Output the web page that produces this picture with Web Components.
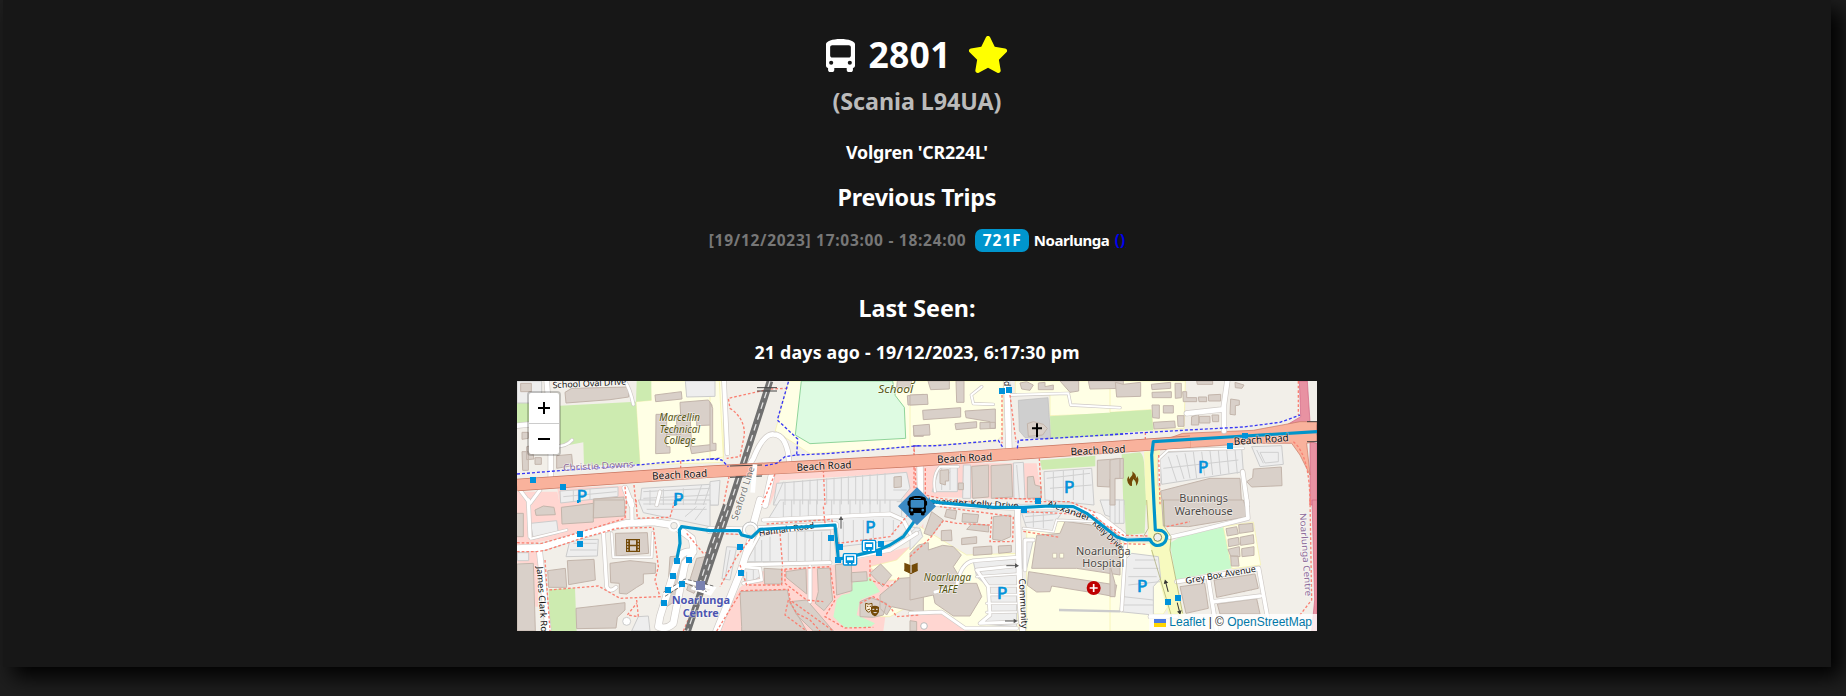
<!DOCTYPE html>
<html lang="en"><head><meta charset="utf-8"><title>2801</title>
<style>html,body{margin:0;height:100%;overflow:hidden}body{background:#1e1e1e;color:#fff;font-family:"Noto Sans","Open Sans",sans-serif;font-weight:700}</style></head>
<body>
<vehicle-card>
  <vehicle-title slot="title"><fit-text w="82">2801</fit-text></vehicle-title>
  <fit-text slot="model" w="169">(Scania L94UA)</fit-text>
  <fit-text slot="body" w="142">Volgren 'CR224L'</fit-text>
  <fit-text slot="triphead" w="159">Previous Trips</fit-text>
  <trip-row slot="trip"></trip-row>
  <fit-text slot="seenhead" w="117">Last Seen:</fit-text>
  <fit-text slot="seen" w="325">21 days ago - 19/12/2023, 6:17:30 pm</fit-text>
  <street-map slot="map"></street-map>
</vehicle-card>
<script>
const shadow=(el,html)=>{const r=el.attachShadow({mode:'open'});r.innerHTML=html;return r};

// Text tracked so that it spans exactly w pixels
class FitText extends HTMLElement{
  connectedCallback(){
    if(this.shadowRoot)return;
    const r=shadow(this,`<style>:host{display:inline-block;white-space:nowrap}span{display:inline-block}</style><span><slot></slot></span>`);
    const s=r.querySelector('span'),w=+this.getAttribute('w'),n=this.textContent.length;
    const gap=(w-s.getBoundingClientRect().width)/(n-1);
    s.style.letterSpacing=gap+'px';
    s.style.marginRight=-gap+'px';
  }
}
class VehicleTitle extends HTMLElement{
  constructor(){super();shadow(this,`<style>:host{display:flex;height:42px;line-height:42px;font-size:35.5px;justify-content:center}
  svg{display:block;fill:#fff}.bus{width:29px;height:33px;margin:6px 14px 0 0}.star{width:42px;height:37px;margin:3px 0 0 16px;fill:#ff0}</style>
  <svg class="bus" viewBox="0 0 448 512" preserveAspectRatio="none"><path fill-rule="evenodd" d="M224 0C348.800 0 448 35.200 448 80V416c0 17.700-14.300 32-32 32v32c0 17.700-14.300 32-32 32H352c-17.700 0-32-14.300-32-32V448H128v32c0 17.700-14.300 32-32 32H64c-17.700 0-32-14.300-32-32V448c-17.700 0-32-14.300-32-32V80C0 35.200 99.200 0 224 0zM64 128V256c0 17.700 14.300 32 32 32H352c17.700 0 32-14.300 32-32V128c0-17.700-14.300-32-32-32H96c-17.700 0-32 14.300-32 32zM80 400a32 32 0 1 0 0-64 32 32 0 1 0 0 64zm288 0a32 32 0 1 0 0-64 32 32 0 1 0 0 64z"/></svg>
  <slot></slot>
  <svg class="star" viewBox="0 0 576 512"><path d="M316.900 18C311.600 7 300.400 0 288.100 0s-23.400 7-28.800 18L195 150.300 51.400 171.500c-12 1.800-22 10.200-25.700 21.700s-.700 24.200 7.900 32.700L137.800 329 113.200 474.700c-2 12 3 24.200 12.900 31.300s23 8 33.800 2.300l128.300-68.500 128.300 68.500c10.800 5.700 23.900 4.900 33.800-2.300s14.900-19.300 12.900-31.300L438.500 329 542.700 225.900c8.600-8.500 11.700-21.200 7.900-32.700s-13.700-19.900-25.700-21.700L381.200 150.300 316.900 18z"/></svg>`)}
}
class TripRow extends HTMLElement{
  constructor(){super();shadow(this,`<style>:host{display:flex;justify-content:center;height:23px;line-height:23px;font-size:15.5px}
  .time{color:#777;margin-right:9px}.badge{width:54px;border-radius:7px;background:#0095cd;text-align:center;margin-right:5px}a{color:#00e;text-decoration:underline;margin-left:5px}
  .dest{font-size:15px}</style>
  <fit-text class="time" w="257">[19/12/2023] 17:03:00 - 18:24:00</fit-text><span class="badge"><fit-text w="38">721F</fit-text></span><fit-text class="dest" w="76">Noarlunga</fit-text><a>()</a>`)}
}
class VehicleCard extends HTMLElement{
  constructor(){super();shadow(this,`<style>:host{display:flex;flex-direction:column;align-items:center;box-sizing:border-box;width:1828px;height:667px;margin-left:3px;padding-top:33px;background:#171717;box-shadow:10px 10px 20px #000}
  ::slotted(*){flex:none}
  .h{font-size:23.3px;line-height:28px;height:28px}.m{font-size:17.8px;line-height:22px;height:22px}
  .model{margin-top:12px;color:#bbb}.body{margin-top:26px}.ph{margin-top:20px}.trip{margin-top:18px}.sh{margin-top:42px}.seen{margin-top:19px}.map{margin-top:18px}</style>
  <slot name="title"></slot><div class="h model"><slot name="model"></slot></div><div class="m body"><slot name="body"></slot></div>
  <div class="h ph"><slot name="triphead"></slot></div><div class="trip"><slot name="trip"></slot></div>
  <div class="h sh"><slot name="seenhead"></slot></div><div class="m seen"><slot name="seen"></slot></div><div class="map"><slot name="map"></slot></div>`)}
}

// Map geometry: eight sheets in a 2400x750 space, [sheet, style, path]
const O={a:[-21,-18],b:[579,-18],c:[1179,-18],d:[1779,-18],e:[-21,357],f:[579,357],g:[1179,357],h:[1779,357],w:[0,0]};
const areas=`
a Y M420 18H640V262L390 270L378 80L424 76Z
a G M380 18H424V76L378 80Z
a G M21 84H60V145H21ZM150 92L378 80L390 268L222 272L220 202L150 215Z
b Y M0 18H28L40 246L0 252ZM236 18H640V212L300 236L196 168Z
b M M274 18H548L556 62L583 97L587 190L300 206L256 180Z
c Y M0 18H280L278 180L258 200L10 213H0Z
c Y M316 18H640V115L420 122V60L316 56Z
c G M420 124L640 110V180L422 192Z
c N2 M325 76L414 68L422 192L345 188L328 168Z
d Y M0 18H226L222 160L130 166L124 104L0 112Z
d G M0 112L124 104L130 166L0 176Z
d E M568 18H592L600 140L620 150V180L590 172L530 150L572 125Z
d E M600 200L621 205V390H600Z
d R M170 192L218 175L430 166L570 140L620 140V198L590 205L600 300L570 240L545 205L420 205L130 226V200Z
d G M35 238L90 232Q104 240 104 300L110 390H40Z
d V M102 230L150 226L146 300L156 390H108Z
a P M21 350H142L150 390H21ZM142 340L342 332L345 390H150Z
b P M175 300L620 272L630 340L590 390H580L584 294L210 316L180 390H160Z
c P M0 265H380L396 375L45 365L12 300H0Z
c G M390 256L556 242V274L396 284Z
e P M21 0H345L350 60L200 105L21 138ZM21 150H84V320H76L70 190L21 188Z
e G M116 268L195 265L200 393H120Z
f P M88 265L140 215L370 195L600 140L640 70V180L540 250L520 393H20Z
f Y M480 200L560 180L630 110V300L540 350H510L560 240L520 240Z
f K M380 300L395 285L420 280L430 242L480 232L510 275L450 300L440 345L495 370L480 382L405 384L370 350Z
g Y M30 80L170 165L320 160V330L330 393H180L100 340L0 345V180Z
g Y M350 80L440 60L630 115V393H350Z
g P M0 342L95 336L160 380L180 393H0Z
h Y M0 125L120 130L180 310L160 342H120V393H0Z
h G M42 0H108L104 100L48 106Z
h V M110 0H158L162 80L185 110L180 150L220 340L215 393H190L125 160L115 110Z
h K M180 130L210 110L340 82L365 205L198 240Z
h Y M340 80L430 66L452 195L366 206Z
h E M606 0H621V393H605L614 300Z
a N M21 18H95V145H60V84H21ZM395 340L600 328L625 390H390ZM150 348L324 336V364L152 384Z
a N M526 18H615V64L530 66Z
b N M0 320L30 316L25 390H0ZM200 325L590 292L600 340L560 390H190Z
c N M66 350L88 280L142 268V350ZM310 264L340 262L345 372L312 370ZM160 270H182V370H158ZM402 290L545 280L552 390L405 375Z
d N M150 250L170 232L395 220L400 290L155 328ZM425 215L515 212L520 268L450 275Z
e N M62 70L140 62L145 100L70 118ZM385 0H600V80L400 38ZM180 120L265 118L262 168L168 170ZM385 350L415 348L420 393H365ZM22 158H56V182H22Z
f N M210 0H640V40L560 120L390 140L380 78L350 60L170 65ZM110 185L150 110L200 96L362 90L360 185ZM50 140L80 142L60 240L36 236ZM90 205L150 208L152 228L110 255Z
g N M335 40L460 32L440 60L430 95L350 85ZM190 185L320 172V380L210 372L240 350L235 260L200 230ZM340 120H370L350 205L338 206ZM0 80L30 85L38 110L0 150ZM570 0H630V60L585 45Z
h N M45 180L65 160L145 170L152 235L130 260V345L30 335ZM0 0H42V70H0Z`;
const bld=`
a M165 52L185 40L356 36V66L300 74L168 84Z M435 60L514 50L516 72L437 80Z M510 82L595 75L606 90L604 150L560 152V128L512 122Z M438 118H470V215H480V234L437 236Z M500 120L540 118L545 215L612 208L616 226L545 236L538 205H500Z M470 160H512V180H470Z M36 172H55V190L36 193Z M50 215L64 212L72 252L50 254Z M75 248H94V268H75Z M36 230H55V286H38Z M140 242L185 238L188 272L140 280Z M32 25H64V50H32Z M250 372L342 366V390H250Z
b M0 82L8 100V205H18V226H0Z M552 306L574 304V336L552 338Z M592 62L640 58V88L594 90Z M562 18H605L600 40L560 38Z M610 152H640V184H612Z
c M0 60L52 58L54 88L0 90Z M38 106L152 98V126L40 134Z M165 108L256 102V160H240V140L168 128Z M10 152L58 148L60 180L12 182Z M135 146L200 140V158L138 164Z M210 142H256V160L210 162Z M54 18H118V42L62 44Z M138 18H162V82H140Z M330 24L350 20L370 30L360 46L335 42Z M385 24L405 22V35L430 30V44H385Z M450 18H506V48L480 52Z M185 274L236 270V366L188 370Z M243 272L304 268L308 366L244 370Z M90 286L116 284V318H106V330L90 325Z M145 324H160V344H145Z M352 306L370 304L375 330L394 335L393 368L352 370Z M562 256L640 250V310L600 312V336L562 334Z M352 146L370 140L400 148L412 160L398 180L355 184Z M535 18H640V40L540 42Z
d M16 22L40 28L92 22V64L20 66Z M124 28L182 22V40L126 44Z M126 52L184 50V68H127Z M126 90H148V130L128 128Z M160 92H190V114H160Z M195 25H214V68L196 70Z M202 122H222V154H204Z M130 142L194 138L196 158L132 162Z M218 50H230V68H260V80H220Z M265 66H290V80H267Z M295 60L332 58V78H296Z M245 125L266 118V150H244Z M268 124H300V144H268Z M306 120H326V140H308Z M375 22L402 30L396 40L376 38Z M362 72L388 76V90L376 92V120L360 118Z M260 18H308V28H262Z M430 282L514 276L516 332L425 336L410 320L428 308Z M152 348L300 310L390 310L395 390H158Z M0 255L30 250V310H15V390H0Z
e M75 30L100 18L132 22L136 44L78 46Z M154 22L250 10V66L156 72Z M252 0H344V48L250 54Z M172 182L252 178L256 240L176 254Z M113 212L166 205L170 262H116Z M300 190L360 182L437 190L436 220L400 222V250L380 262L350 282L328 280V250L302 248Z M198 325L345 308V330L322 352L318 384L200 386Z M316 100L412 98L416 160L318 168Z M21 192L70 190L76 393H21Z M0 40H40V110H21Z M560 175L585 170L570 240L552 280L530 270Z M480 170L540 165L500 300L470 320Z
f M90 275L232 270L240 310L260 340L290 393H95V380Z M162 205L216 208V252H164Z M228 215L288 206L290 282L228 232Z M240 305L290 300L370 393H310L260 345Z M322 206L362 204V244L368 300L342 332L316 310L325 275Z M376 194L424 190L426 272L380 285Z M424 218L470 215L472 242L424 246Z M480 220L512 192L545 226L518 260Z M510 285L570 235L640 230V340L545 320L530 345L510 325Z M450 305L480 292L530 310L520 345L490 352L450 350Z
g M110 28L140 32L136 58L104 50Z M158 40L206 44L202 68L156 66Z M65 35L100 60L65 108L42 100Z M94 92L124 90L126 122H94Z M155 115L200 110V130L155 134Z M190 142L245 138L246 162L190 166Z M265 138L304 136V156L266 160Z M185 72L236 76V96L170 88Z M250 50L302 45V110L275 122L248 118Z M25 135L55 128V150L98 136L130 140L154 165L130 200L160 250L200 250L215 290L180 348L130 348L75 310L70 285L0 300V160Z M380 106L450 100L465 64L550 76L630 110V225L500 205L365 205Z M356 215L620 255L614 290L560 280L425 258L420 275L380 276L352 256Z M0 362L20 365V393H0Z
h M155 0H400L415 50L235 80L160 78Z M348 86L380 80L385 102L352 108Z M386 74L428 70L430 94L388 100Z M354 118L385 112L388 134L356 140Z M390 112L430 104L432 130L392 136Z M354 148L388 140L390 170L362 168Z M395 146L432 140V166L396 170Z M362 168H384L387 198H364Z M0 195L15 250V290H0Z M210 260L284 250L295 325L228 340Z M312 240L435 222L445 265L320 292Z M322 312L440 296L450 342H330Z`;
// stroke width, sheet, path
const roads=`
8 a M345 20Q360 40 370 88 M130 215Q170 215 186 195
14 a M110 18L122 160V312 M21 152L60 148
16 a M345 340L365 390
9 a M440 390L450 350 M30 345L60 385L90 345
12 b M42 18L52 235
14 b M100 300L130 250Q160 176 190 178Q232 178 238 265
18 b M185 300L165 390
17 c M290 18L297 225 M30 270L32 390
6 c M300 60L475 55L482 90L630 98 M215 35L184 60L190 86L250 88 M75 350Q66 300 90 275H145
14 d M230 115L340 103L352 18 M342 90V168
12 d M398 290L412 390
6 d M148 330V250L175 225L400 220
20 e M21 146L95 142L205 108L350 70L430 66L492 76L545 115Q560 160 525 190L490 370Q470 390 445 380L450 350L500 190Q510 150 550 155
16 e M88 150L100 260L115 393
10 e M365 0L366 62 M280 95L290 260Q300 280 318 262 M55 0L60 110
6 e M305 100L310 172H425L428 98 M62 116L170 90
20 f M0 90L120 92L150 88L375 76 M128 100L90 220L20 393 M125 92L150 0
10 f M160 60L540 42L580 60L600 100 M110 194L360 188 M375 80L385 180L540 150L620 100 M300 200L300 305
8 f M150 100L95 200L150 205L155 240L100 250
15 g M0 5L90 12L300 22L490 20L570 50L640 105
16 g M322 20L330 300L338 393
9 g M320 172L190 182Q150 190 140 260L75 276 M320 197L200 210L235 260L240 345L210 370L320 366 M0 340L95 336L165 385H320 M370 120H345V210
5 g M200 230L320 222 M236 258H320 M236 284H320 M230 310H320 M230 337L320 336 M440 60L430 95L340 85 M440 60L560 65L630 90
11 h M180 112L240 98L414 55L410 0 M200 245L446 205L480 393 M295 235L320 393 M312 305L450 288
9 h M0 100L50 118L120 118 M48 120L35 330
10 h M120 350L200 350`;
const stalls=`
a M400 350L600 340M400 370L600 360M420 345V390M460 342V390M520 340V390M555 388L575 330M160 365L320 350M190 345V380M240 342V375M580 390L600 330
b M190 390L220 320M225 390V320M252 388V318M278 388V316M300 388V314M322 388V312M350 388V310M372 388V308M394 388V306M415 388V304M437 388V302M458 388V300M480 388V298M502 388V296M525 386V294M560 380H590M550 345H590
c M120 290L100 320M95 280V345M120 345V270M320 270L328 370M410 310L540 295M420 340L545 330M430 290V375M460 285V375M490 285V375M520 285V375
d M175 245L200 320M200 240L222 312M225 235L240 310M250 230L260 310M275 230L284 302M300 228L308 300M325 226L332 298M350 225L357 296M375 224L382 296M160 280L385 255M440 225L460 265M450 232H505V260L465 264Z
e M190 130H260M180 150H260M400 12H590M410 28H590M525 50L560 20M555 60L585 20
f M220 5V60M245 0V58M270 0V56M295 0V55M320 0V54M365 0V50M390 0V48M420 0V45M450 0V44M480 0V42M510 0V42M540 0V40M575 0V50M400 65V130M430 60V125M460 60V120M490 58V115M520 55V112M550 60V105M135 140V190M155 120V190M180 110V188M235 98V185M260 95V185M285 95V185M310 95V182M335 95V182M60 150L45 235M110 215V250M130 210V240
g M345 50L440 42M345 68L430 60M370 40V82M400 38V85M0 115L30 90M0 100L20 80
h M75 180H140M70 205H145M55 230H140M55 255L150 245M40 290L130 300M40 315H130M15 0V70M28 0V70
h M225 275L240 332M245 268L258 328M330 240L338 288M350 238L358 285M372 235L380 280M395 232L402 277M417 228L424 272M320 265L440 244M345 310L352 342M370 306L376 342M395 302L402 342M420 300L428 342M325 325L445 310
a M190 42V80M215 40V80M240 40V78M265 38V76M290 38V74M315 36V70M335 36V68`;
const foot=`
b M232 40L180 42L55 70L60 100Q105 130 103 180L90 245L50 250M60 290L40 390M340 285L345 390M612 210L618 340M200 285L155 390
c M276 60V205M300 60L318 200M388 250L394 372L250 370M46 280V360L100 372L240 385M12 220V340
d M565 18V120M550 200Q600 240 600 390M106 172V200M146 240L150 390
a M512 258V280M345 335L350 390M372 330L378 390
e M21 128L95 130L200 100L345 55L350 0M21 155L80 155L110 150L205 118L320 85L430 82L445 200L435 240L450 290L330 295L265 258L116 270M378 0L382 55L480 52L495 0M105 180L120 393M530 100L580 160L620 150M380 300L385 350L352 345L380 310M520 393L560 300
f M20 393L95 272L235 268L240 300L370 393M90 195L110 255L215 255V208L360 200L375 300L345 350L405 384L490 382M225 208V250L290 300L340 305M170 72L365 58L385 130L540 110L630 0M155 100L210 100L218 200M340 20L345 70M480 180V240L540 260L570 230M235 300L225 345L290 393M240 305L260 340L300 360L330 393M450 310L490 290L540 320L560 350L630 345M20 100L130 105L80 170L30 260
g M0 170L60 115L100 62L140 70L240 75M245 50L240 125H308L310 50L90 20M340 94L450 112M350 35L550 45L630 110M345 5L480 5L560 40
h M0 130L110 133M0 80L40 106L115 108M600 0L605 300L570 345M170 80L240 65`;
const blue=`
a M21 297L160 286L370 271L512 258L630 250
b M0 252L35 255L55 275M165 272L200 265L225 245L260 240L263 192L202 135L236 18M260 240L350 236L630 212
c M10 213L80 212L265 196L280 220M322 220L325 196L640 177
d M0 179L235 165L400 156L510 142L570 120`;
const P=(txt,fn)=>txt.trim().split('\n').map(fn).join('');
const at=(s,x)=>`<g transform="translate(${O[s]})">${x}</g>`;
const layer=(txt,cls)=>P(txt,l=>at(l[0],`<path class="${cls}" d="${l.slice(2)}"/>`));
const roadLayer=(cls,extra)=>P(roads,l=>{const m=l.match(/^(\d+) (\w) (.*)$/);return at(m[2],`<path class="${cls}" stroke-width="${+m[1]+extra}" d="${m[3]}"/>`)});
const T=(s,x,y,t,size,len,rot=0,cls='')=>at(s,`<text class="${cls}" transform="translate(${x} ${y}) rotate(${rot})" font-size="${size}" textLength="${len}" lengthAdjust="spacingAndGlyphs">${t}</text>`);
const stops={a:[[69,315],[159,336]],c:[[276,48],[297,45],[384,378]],d:[[405,183],[360,213]],e:[[210,102],[210,132],[501,183],[537,180],[489,228],[516,252],[474,270],[462,309]],f:[[363,114],[390,141],[384,180],[90,141],[93,219],[513,132],[507,159]],g:[[342,30],[384,3]],h:[[174,306],[204,294]]};
const arrow=(s,x,y,r,c='#555')=>at(s,`<g transform="translate(${x} ${y}) rotate(${r})"><path d="M-18 0H12" stroke="${c}" stroke-width="3"/><path d="M8 -7L20 0L8 7Z" fill="${c}"/></g>`);
const platform=(s,x,y)=>at(s,`<g transform="translate(${x} ${y})"><rect x="-20" y="-17" width="40" height="34" rx="4" fill="#fff" stroke="#0092da" stroke-width="4"/><path fill="#0092da" fill-rule="evenodd" d="M-13 -11H13V11H8V16H3V11H-3V16H-8V11H-13ZM-9 -6V3H9V-6Z"/></g>`);
const route='M2400 152L2184 165L1909 182L1904 222L1911 372L1915 447L1934 449Q1948 456 1949 467Q1948 482 1937 489Q1924 496 1914 492Q1903 487 1899 475L1829 477L1800 468L1709 397L1669 377L1599 375L1519 379L1429 379L1269 365L1199 355L1196 415L1159 467L1119 492L1079 509L964 535L954 432L729 445L704 469L674 462L667 449L579 449L524 441L494 437L487 447L489 487L479 537';
const svg=`<svg class="map" viewBox="0 0 2400 750" width="800" height="250">
${P(areas,l=>{const m=l.match(/^(\w) (\S+) (M.*)$/);return at(m[1],`<path class="${m[2]}" d="${m[3]}"/>`)})}
${layer(stalls,'stall')}
${layer(bld,'B')}
${roadLayer('case',4)}${roadLayer('road',0)}
${layer(foot,'foot')}
<path d="M759 0L639 372L579 550L512 750M628 372L582 500L545 620" fill="none" stroke="#707070" stroke-width="20"/>
<path d="M759 0L639 372L579 550L512 750M628 372L582 500L545 620" fill="none" stroke="#e4e4e4" stroke-width="4" stroke-dasharray="20 14"/>
<path d="M0 312L579 272L1179 240L1809 197L2020 182" fill="none" stroke="#c77560" stroke-width="37"/>
<path d="M0 312L579 272L1179 240L1809 197L2020 182" fill="none" stroke="#f9b29c" stroke-width="33"/>
<path d="M639 255L735 252M639 289L735 285M720 20H780M720 30H780M2370 122H2400M2370 182H2400" fill="none" stroke="#444" stroke-width="3"/>
<path d="M707 335L714 250" fill="none" stroke="#fff" stroke-width="14"/>
${layer(blue,'blue')}
${at('f','<circle cx="121" cy="90" r="24" fill="#fff" stroke="#bbb" stroke-width="3"/><circle cx="121" cy="90" r="15" fill="#f2efe9" stroke="#ccc" stroke-width="2"/>')}
${at('e','<circle cx="492" cy="77" r="18" fill="#fff"/><circle cx="492" cy="77" r="10" fill="#f2efe9" stroke="#bbb" stroke-width="2"/><path d="M460 282L525 242L610 265L600 280L545 262" fill="none" stroke="#fff" stroke-width="12"/><path d="M460 277L525 237L610 258M465 289L527 250L590 275" fill="none" stroke="#333" stroke-width="2" stroke-dasharray="12 5"/><path fill="#7981b0" d="M558 243H585V270H558Z"/><circle cx="350" cy="364" r="12" fill="#fff" stroke="#ccc" stroke-width="3"/>')}
${at('h','<circle cx="143" cy="112" r="24" fill="#f7fabf"/><circle cx="143" cy="112" r="12" fill="#eee" stroke="#8a8a55" stroke-width="3"/><path d="M110 0L115 85L100 110M160 0L163 80L183 110L180 150L218 340M125 150L185 350" fill="none" stroke="#a5a568" stroke-width="2"/>')}
${at('g','<path d="M447 330L630 334" stroke="#ccc" stroke-width="7"/><path d="M428 160H440V174H428ZM449 160H461V174H449Z" fill="#ffffe5" stroke="#c3b5ab" stroke-width="2"/><circle cx="42" cy="378" r="10" fill="#fff" stroke="#bbb" stroke-width="3"/><circle cx="551" cy="264" r="21" fill="#bf0000"/><path d="M539 264H563M551 252V276" stroke="#fff" stroke-width="5"/>')}
${T('f',148,108,'Hannah Road',26,167,-8)}${T('g',34,10,'Alexander Kelly Drive',25,292,3)}${T('g',410,17,'Alexander',25,136,20)}${T('g',545,72,'Kelly Drive',25,118,43)}
<path d="${route}" fill="none" stroke="#0094ca" stroke-width="9.500" stroke-linejoin="round" stroke-linecap="round"/>
${Object.entries(stops).map(([s,v])=>at(s,v.map(p=>`<path fill="#0092da" d="M${p[0]-9} ${p[1]-9}h18v18h-18z"/>`).join(''))).join('')}
${platform('f',477,138)}${platform('f',420,178)}
${at('e','<path fill="#0092da" d="M201 0H207V9H201ZM493 0H514V4L497 4V18H492Z"/>')}
${arrow('g',307,197,0)}${arrow('g',303,363,0)}${arrow('f',393,68,-90)}${arrow('h',170,258,-105,'#333')}${arrow('h',206,325,76,'#333')}
${T('a',427,314,'Beach Road',31,165,-3)}${T('b',260,288,'Beach Road',31,165,-3)}${T('c',82,264,'Beach Road',31,165,-3)}${T('c',482,241,'Beach Road',31,165,-3)}${T('d',372,210,'Beach Road',31,165,-4)}
${T('a',128,40,'School Oval Drive',26,221,-3)}${T('a',160,288,'Christie Downs',28,212,-3,'pur')}
${T('a',448,137,'Marcellin',31,122,0,'sch')}${T('a',449,173,'Technical',31,121,0,'sch')}${T('a',461,208,'College',31,96,0,'sch')}
${T('b',505,55,'School',32,104,0,'sch')}${T('c',2,18,'g',30,18,0,'sch')}
${T('w',661,420,'Seaford Line',28,168,-72,'line')}
${T('c',296,34,'p',26,16,-90)}
${T('e',80,200,'James Clark Road',27,230,86)}
${T('g',327,236,'Community',27,150,87)}
${T('h',228,252,'Grey Box Avenue',27,214,-10)}
${T('h',569,40,'Noarlunga Centre',27,250,86,'pur')}
${T('e',485,312,'Noarlunga',32,175,0,'sta')}${T('e',518,350,'Centre',32,108,0,'sta')}
${T('g',41,243,'Noarlunga',31,142,0,'sch')}${T('g',83,278,'TAFE',31,60,0,'sch')}
${T('g',498,165,'Noarlunga',34,164,0,'gry')}${T('g',517,202,'Hospital',34,126,0,'gry')}
${T('d',208,380,'Bunnings',34,146,0,'gry')}${T('h',194,44,'Warehouse',34,174,0,'gry')}
${[['a',200,382],['a',490,390],['c',462,354],['d',264,293],['f',466,98],['g',261,296],['h',81,275]].map(v=>T(v[0],v[1],v[2],'P',47,31,0,'park')).join('')}
${at('c','<path d="M381 145V187M366 160H396" stroke="#000" stroke-width="6"/>')}
${at('d','<path fill="#734a08" fill-rule="evenodd" d="M60 332Q44 315 57 303L57 313L64 304Q70 298 66 289Q82 299 77 312L82 303Q90 319 78 333Q80 320 70 312Q63 322 66 333Z"/>')}
${at('e','<path fill="#734a08" fill-rule="evenodd" d="M348 117H390V156H348ZM360 121V134H378V121ZM360 139V152H378V139ZM351 121V125H355V121ZM351 130V134H355V130ZM351 139V143H355V139ZM351 148V152H355V148ZM383 121V125H387V121ZM383 130V134H387V130ZM383 139V143H387V139ZM383 148V152H387V148Z"/>')}
${at('f','<path fill="#734a08" d="M583 188L601 195V220L583 213ZM605 195L623 188V213L605 220Z"/><path fill="none" stroke="#734a08" stroke-width="3" d="M583 210L603 221L623 210"/><path fill="#fff2df" stroke="#734a08" stroke-width="3" d="M467 310Q476 315 486 310V326Q476 346 467 328Z"/><path fill="#734a08" fill-rule="evenodd" d="M483 321Q494 314 507 321V336Q494 360 483 338ZM487 326V330H493V326ZM498 326V330H503V326ZM489 336Q495 344 502 336Z"/><path d="M471 319H475M479 319H483M472 330L480 327" stroke="#734a08" stroke-width="3"/>')}
<path d="M1200 319L1257 376L1200 433L1143 376Z" fill="#3b8ac4"/>
<svg x="1168" y="344" width="66" height="60" viewBox="0 0 576 512"><path fill-rule="evenodd" d="M288 0C422.400 0 512 35.200 512 80V128c17.700 0 32 14.300 32 32v64c0 17.700-14.300 32-32 32V416c0 17.700-14.300 32-32 32v32c0 17.700-14.300 32-32 32H416c-17.700 0-32-14.300-32-32V448H192v32c0 17.700-14.300 32-32 32H128c-17.700 0-32-14.300-32-32V448c-17.700 0-32-14.300-32-32V256c-17.700 0-32-14.300-32-32V160c0-17.700 14.300-32 32-32V80C64 35.200 153.600 0 288 0zM112 140v136c0 17.700 14.300 32 32 32H432c17.700 0 32-14.300 32-32V140c0-17.700-14.300-32-32-32H144c-17.700 0-32 14.300-32 32zM144 410a36 36 0 1 0 0-72 36 36 0 1 0 0 72zm288 0a36 36 0 1 0 0-72 36 36 0 1 0 0 72zM384 68c0-8.800-7.200-16-16-16H208c-8.800 0-16 7.200-16 16s7.200 16 16 16H368c8.800 0 16-7.200 16-16z"/></svg>
</svg>`;
class StreetMap extends HTMLElement{
  constructor(){super();shadow(this,`<style>:host{display:block;position:relative;width:800px;height:250px;overflow:hidden;background:#f2efe9;font-weight:400}
  .map{display:block}
  .Y{fill:#ffffe5;stroke:#f5f0a8;stroke-width:2}.G{fill:#cdebb0}.K{fill:#c8facc}.M{fill:#defbe2;stroke:#8fd49a;stroke-width:3}.P{fill:#ffd6d1}
  .N{fill:#eee;stroke:#ccc;stroke-width:3}.N2{fill:#cfcfcf;stroke:#bbb;stroke-width:2}.R{fill:#f9b29c;stroke:#c77560;stroke-width:2}.E{fill:#e892a2;stroke:#d06080;stroke-width:2}.V{fill:#f7fabf}
  .B{fill:#d9d0c9;stroke:#c3b5ab;stroke-width:3}.stall{fill:none;stroke:#d0d0d0;stroke-width:3}
  .case{fill:none;stroke:#cfcac6;stroke-linecap:round;stroke-linejoin:round}.road{fill:none;stroke:#fff;stroke-linecap:round;stroke-linejoin:round}
  .foot{fill:none;stroke:#fa8072;stroke-width:4;stroke-dasharray:8 6}.blue{fill:none;stroke:#3737f5;stroke-width:4;stroke-dasharray:9 6}
  text{font-family:"Noto Sans",sans-serif;fill:#111;paint-order:stroke;stroke:rgba(255,255,255,.55);stroke-width:4px}
  text.pur{fill:#8c6a99}text.sch{fill:#555510;font-style:italic}text.gry{fill:#4c4844}text.sta{fill:#4c55b0;font-weight:700}text.line{fill:#777}text.park{fill:#0092da;stroke:#0092da;stroke-width:2px}
  .zoom{position:absolute;left:10px;top:10px;width:30px;border:2px solid rgba(0,0,0,.2);border-radius:4px;background:#fff;background-clip:padding-box}
  .zoom svg{display:block}.zoom svg:first-child{border-bottom:1px solid #ccc}
  .attr{position:absolute;right:0;bottom:0;height:17px;width:168px;box-sizing:border-box;padding:0 5px;background:rgba(255,255,255,.8);display:flex;align-items:center;justify-content:space-between;color:#333;font:12px/17px "Liberation Sans",Arial,sans-serif;white-space:pre}.attr b{font-weight:400;color:#0078a8}</style>
  ${svg}
  <div class="zoom"><svg width="30" height="30"><path d="M9 15H21M15 9V21" stroke="#000" stroke-width="2"/></svg><svg width="30" height="30"><path d="M9 15H21" stroke="#000" stroke-width="2"/></svg></div>
  <div class="attr"><svg width="12" height="8"><path fill="#4c7be1" d="M0 0h12v4H0z"/><path fill="#ffd500" d="M0 4h12v4H0z"/></svg><span><b>Leaflet</b> | © <b>OpenStreetMap</b></span></div>`)}
}
// fit-text comes last: it measures its text inside the finished containers
customElements.define('vehicle-card',VehicleCard);customElements.define('vehicle-title',VehicleTitle);customElements.define('trip-row',TripRow);customElements.define('street-map',StreetMap);customElements.define('fit-text',FitText);
</script></body></html>
